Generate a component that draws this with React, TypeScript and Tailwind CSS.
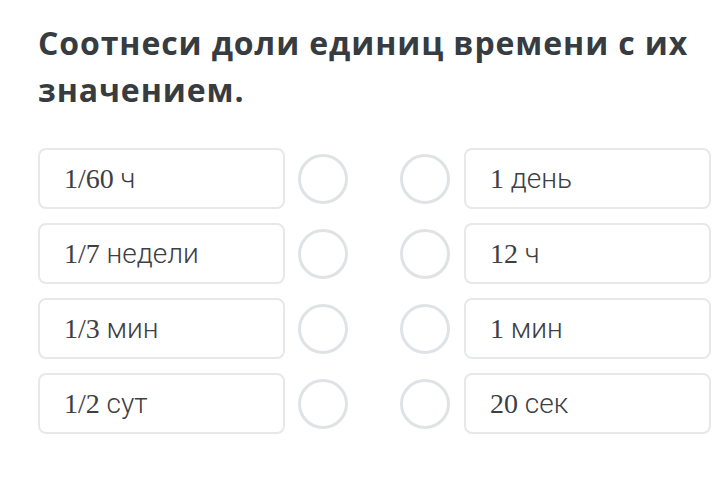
const rows: [string, string][] = [
  ["1/60 ч", "1 день"],
  ["1/7 недели", "12 ч"],
  ["1/3 мин", "1 мин"],
  ["1/2 сут", "20 сек"],
];

// digits render in a serif face in the original, words in a sans
function Label({ text }: { text: string }) {
  const parts = text.match(/[0-9/]+|[^0-9/]+/g) ?? [];
  return (
    <span className="whitespace-pre">
      {parts.map((p, i) =>
        /[0-9]/.test(p) ? (
          <span key={i} className="font-['Liberation_Serif',serif]">
            {p}
          </span>
        ) : (
          <span key={i}>{p}</span>
        )
      )}
    </span>
  );
}

function Card({ label }: { label: string }) {
  return (
    <div className="flex h-[61px] w-[247px] shrink-0 items-center rounded-lg border-2 border-[#e6e8ea] bg-white pl-[24px] font-['Roboto',sans-serif] text-[28px] font-light text-[#3d4043]">
      <Label text={label} />
    </div>
  );
}

function Dot() {
  return <div className="h-[50px] w-[50px] shrink-0 rounded-full border-[3px] border-[#e0e3e5] bg-white" />;
}

export default function App() {
  return (
    <div className="h-[504px] w-[720px] bg-white pl-[38px] pr-[10px] pt-[19px]">
      <h1 className="font-['Open_Sans',sans-serif] text-[32px] font-bold leading-[47px] tracking-[0.9px] text-[#373c41]">
        Соотнеси доли единиц времени с их значением.
      </h1>
      <div className="mt-[35px] flex flex-col gap-[14px]">
        {rows.map(([left, right]) => (
          <div key={left} className="flex items-center">
            <Card label={left} />
            <div className="ml-[13px]">
              <Dot />
            </div>
            <div className="ml-[52px]">
              <Dot />
            </div>
            <div className="ml-[14px]">
              <Card label={right} />
            </div>
          </div>
        ))}
      </div>
    </div>
  );
}
